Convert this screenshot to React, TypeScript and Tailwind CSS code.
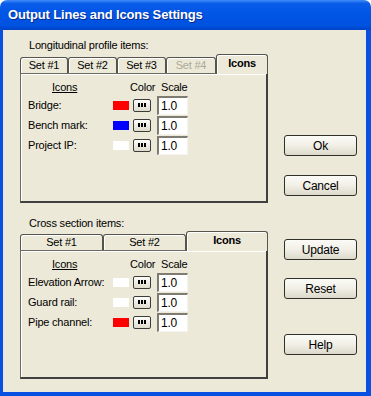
import React from "react";

type Tab = { label: string; w: string; active?: boolean; disabled?: boolean };
type Item = { label: string; swatch: string };

const upperTabs: Tab[] = [
  { label: "Set #1", w: "w-[48px]" },
  { label: "Set #2", w: "w-[49px]" },
  { label: "Set #3", w: "w-[49px]" },
  { label: "Set #4", w: "w-[50px]", disabled: true },
  { label: "Icons", w: "w-[52px]", active: true },
];

const lowerTabs: Tab[] = [
  { label: "Set #1", w: "w-[83px]" },
  { label: "Set #2", w: "w-[83px]" },
  { label: "Icons", w: "w-[82px]", active: true },
];

const upperItems: Item[] = [
  { label: "Bridge:", swatch: "bg-[#ff0000]" },
  { label: "Bench mark:", swatch: "bg-[#0000ff]" },
  { label: "Project IP:", swatch: "bg-white" },
];

const lowerItems: Item[] = [
  { label: "Elevation Arrow:", swatch: "bg-white" },
  { label: "Guard rail:", swatch: "bg-white" },
  { label: "Pipe channel:", swatch: "bg-[#ff0000]" },
];

function TabStrip({ tabs }: { tabs: Tab[] }) {
  return (
    <div className="flex h-[19px] items-end">
      {tabs.map((t) =>
        t.active ? (
          <div
            key={t.label}
            className={`${t.w} relative z-10 -mb-px flex h-[20px] items-center justify-center rounded-t-[3px] border border-b-0 border-[#55554e] bg-[#ece9d8] pb-[2px] font-bold shadow-[inset_1px_1px_0_#ffffff]`}
          >
            {t.label}
          </div>
        ) : (
          <div
            key={t.label}
            className={`${t.w} flex h-[16px] items-center justify-center rounded-t-[3px] border border-b-0 border-[#55554e] shadow-[inset_1px_1px_0_#ffffff] ${
              t.disabled ? "text-[#aca899]" : "text-black"
            }`}
          >
            {t.label}
          </div>
        )
      )}
    </div>
  );
}

function DotsButton() {
  return (
    <div className="ml-[4px] flex h-[13px] w-[18px] items-center justify-center gap-[1px] rounded-[2px] border border-[#3c3c38] bg-gradient-to-b from-[#fdfdfb] to-[#dedbcd]">
      <span className="h-[4px] w-[2px] bg-black" />
      <span className="h-[4px] w-[2px] bg-black" />
      <span className="h-[4px] w-[2px] bg-black" />
    </div>
  );
}

function Panel({ items, h }: { items: Item[]; h: string }) {
  return (
    <div
      className={`${h} w-[248px] border border-r-2 border-b-2 border-[#6b6a63] border-r-[#404040] border-b-[#404040] pl-[7px] pt-[5px] shadow-[inset_1px_1px_0_#ffffff]`}
    >
      <div className="flex h-[16px] items-center">
        <div className="w-[85px] pl-[24px] underline">Icons</div>
        <div className="w-[48px] pl-[17px]">Color</div>
        <div>Scale</div>
      </div>
      {items.map((it) => (
        <div key={it.label} className="flex h-[20px] items-center">
          <div className="w-[85px]">{it.label}</div>
          <div className={`h-[9px] w-[16px] ${it.swatch}`} />
          <DotsButton />
          <div className="ml-[6px] flex h-[19px] w-[31px] items-center border-t-2 border-l-2 border-t-[#7d7b72] border-l-[#7d7b72] border-r border-b border-r-[#f4f3ee] border-b-[#f4f3ee] bg-white pl-[2px] text-[12px]">
            1.0
          </div>
        </div>
      ))}
    </div>
  );
}

function XpButton({ label, mt }: { label: string; mt: string }) {
  return (
    <div
      className={`${mt} flex h-[21px] w-[73px] items-center justify-center rounded-[3px] border border-[#2f2f2c] bg-gradient-to-b from-[#fbfbf7] via-[#f1efe6] to-[#dcd9cb] text-[12px]`}
    >
      {label}
    </div>
  );
}

export default function App() {
  return (
    <div className="h-[396px] w-[371px] bg-white font-['Liberation_Sans',Arial,sans-serif] text-[11px] tracking-[-0.2px] text-black">
      <div className="flex h-full flex-col">
        <div className="flex h-[30px] items-center rounded-t-[7px] bg-[linear-gradient(to_bottom,#3f8cf7_0%,#0a5ce9_12%,#0055e5_50%,#0052e0_85%,#0042c8_100%)] pl-[8px]">
          <span className="text-[13px] font-bold tracking-[-0.15px] text-white [text-shadow:1px_1px_0_#0a2a8a]">
            Output Lines and Icons Settings
          </span>
        </div>
        <div className="flex flex-1 border-l-[3px] border-r-[5px] border-b-[4px] border-[#0750e2] bg-[#ece9d8]">
          <div className="flex flex-col pl-[17px]">
            <div className="mt-[9px] h-[13px] pl-[9px] leading-[13px]">Longitudinal profile items:</div>
            <div className="mt-[2px]">
              <TabStrip tabs={upperTabs} />
            </div>
            <Panel items={upperItems} h="h-[130px]" />
            <div className="mt-[14px] h-[13px] pl-[9px] leading-[13px]">Cross section items:</div>
            <div className="mt-[1px]">
              <TabStrip tabs={lowerTabs} />
            </div>
            <Panel items={lowerItems} h="h-[129px]" />
          </div>
          <div className="ml-[16px] flex flex-col">
            <XpButton label="Ok" mt="mt-[105px]" />
            <XpButton label="Cancel" mt="mt-[19px]" />
            <XpButton label="Update" mt="mt-[43px]" />
            <XpButton label="Reset" mt="mt-[18px]" />
            <XpButton label="Help" mt="mt-[35px]" />
          </div>
        </div>
      </div>
    </div>
  );
}
